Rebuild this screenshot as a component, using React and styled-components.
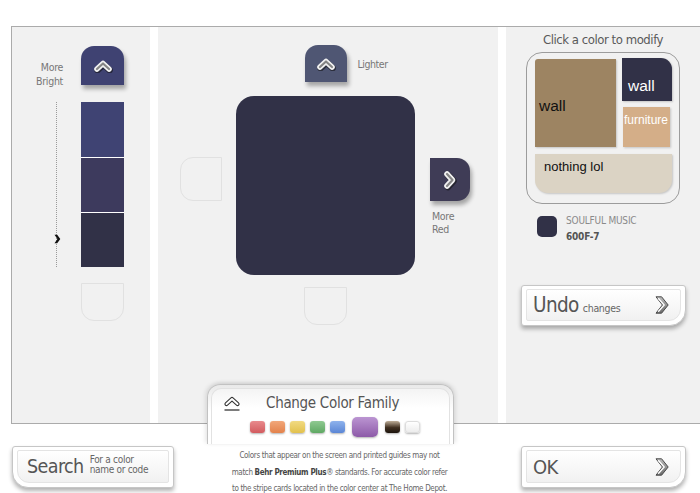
import React from "react";
import styled, { createGlobalStyle } from "styled-components";

const NARROW = `"Liberation Sans Narrow", "Arial Narrow", "DejaVu Sans Condensed", "Roboto Condensed", sans-serif`;
const ARIAL = `"Liberation Sans", Arial, sans-serif`;

const Global = createGlobalStyle`
  html, body { margin: 0; padding: 0; background: #fff; }
  body { font-family: ${NARROW}; width: 700px; height: 493px; overflow: hidden; }
  *, *::before, *::after { box-sizing: border-box; }
`;

const Page = styled.div`
  width: 700px;
  height: 493px;
  overflow: hidden;
`;

const Frame = styled.div`
  margin: 26px 0 0 11px;
  height: 398px;
  border: 1px solid #ababab;
  border-right: none;
  background: #fff;
  display: grid;
  grid-template-columns: 138px 340px 1fr;
  column-gap: 8px;
`;

const Panel = styled.div`
  background: #f1f1f1;
  min-width: 0;
`;

/* ---------- shared bits ---------- */

const NavButton = styled.button`
  border: none;
  padding: 0;
  margin: 0;
  cursor: pointer;
  width: ${(p) => p.$w}px;
  height: ${(p) => p.$h}px;
  background: ${(p) => p.$color};
  border-radius: ${(p) => (p.$dir === "right" ? "0 13px 13px 0" : "13px 13px 0 0")};
  box-shadow: 2px 4px 4px rgba(0, 0, 0, 0.32);
  display: flex;
  align-items: center;
  justify-content: center;
`;

const Ghost = styled.div`
  width: ${(p) => p.$w}px;
  height: ${(p) => p.$h}px;
  border: 1px solid #e1e1e1;
  border-radius: ${(p) => (p.$dir === "left" ? "13px 0 0 13px" : "0 0 13px 13px")};
`;

const SmallLabel = styled.div`
  font-size: 10.5px;
  letter-spacing: -0.3px;
  line-height: 14px;
  color: #777;
  white-space: nowrap;
`;

const UpChevron = () => (
  <svg width="20" height="14" viewBox="0 0 20 14">
    <polyline points="4,10 10,4.5 16,10" fill="none" stroke="#111" strokeOpacity="0.55" strokeWidth="6.5" strokeLinecap="round" strokeLinejoin="round" transform="translate(0.6,1.2)" />
    <polyline points="4,10 10,4.5 16,10" fill="none" stroke="#f2f2f2" strokeWidth="5.6" strokeLinecap="round" strokeLinejoin="round" />
    <polyline points="4,10 10,4.5 16,10" fill="none" stroke="#858585" strokeWidth="2.2" strokeLinecap="round" strokeLinejoin="round" />
  </svg>
);

const RightChevron = () => (
  <svg width="16" height="22" viewBox="0 0 16 22">
    <polyline points="5,5 10.5,11 5,17" fill="none" stroke="#111" strokeOpacity="0.55" strokeWidth="6.5" strokeLinecap="round" strokeLinejoin="round" transform="translate(1,1)" />
    <polyline points="5,5 10.5,11 5,17" fill="none" stroke="#f2f2f2" strokeWidth="5.6" strokeLinecap="round" strokeLinejoin="round" />
    <polyline points="5,5 10.5,11 5,17" fill="none" stroke="#858585" strokeWidth="2.2" strokeLinecap="round" strokeLinejoin="round" />
  </svg>
);

const BevelChevron = () => (
  <svg width="16" height="20" viewBox="0 0 16 20">
    <defs>
      <linearGradient id="bevelChev" x1="0" y1="0" x2="0" y2="1">
        <stop offset="0" stopColor="#bdbdbd" />
        <stop offset="1" stopColor="#6a6a6a" />
      </linearGradient>
    </defs>
    <path d="M2 1.8 H7.6 L14.2 10 L7.6 18.2 H2 L8.4 10 Z" fill="url(#bevelChev)" stroke="#4a4a4a" strokeWidth="1" strokeLinejoin="round" />
    <path d="M4.2 3.2 L10.2 10 L4.2 16.8" fill="none" stroke="#fff" strokeWidth="1.3" />
  </svg>
);

/* ---------- left panel ---------- */

const LeftPanel = styled(Panel)`
  display: grid;
  grid-template-columns: 69px 43px;
  grid-template-rows: 39px 165px 38px;
  row-gap: 17px;
  padding-top: 19px;
  align-content: start;
`;

const BrightLabel = styled(SmallLabel)`
  grid-column: 1;
  grid-row: 1;
  text-align: right;
  padding: 14px 18px 0 0;
`;

const Track = styled.div`
  grid-column: 1;
  grid-row: 2;
  position: relative;
`;

const Dots = styled.div`
  margin-left: 44px;
  width: 0;
  height: 100%;
  border-left: 1px dotted #9a9a9a;
`;

const TrackMarker = styled.svg`
  position: absolute;
  left: 42px;
  top: 132px;
`;

const SwatchStack = styled.div`
  grid-column: 2;
  grid-row: 2;
  display: flex;
  flex-direction: column;
`;

const Swatch = styled.div`
  height: 55px;
  background: ${(p) => p.$color};
  & + & {
    border-top: 1px solid #fff;
  }
`;

/* ---------- center panel ---------- */

const CenterPanel = styled(Panel)`
  display: grid;
  grid-template-columns: 42px 179px 40px;
  grid-template-rows: 37px 179px 38px;
  column-gap: 14px;
  row-gap: 14px;
  padding: 18px 0 0 22px;
  align-content: start;
`;

const TopRow = styled.div`
  grid-column: 2;
  grid-row: 1;
  display: grid;
  grid-template-columns: 1fr 42px 1fr;
  align-items: center;
`;

const LighterLabel = styled(SmallLabel)`
  margin-left: 11px;
  letter-spacing: -0.45px;
`;

const LeftGhost = styled(Ghost)`
  grid-column: 1;
  grid-row: 2;
  margin-top: 61px;
`;

const BigColor = styled.div`
  grid-column: 2;
  grid-row: 2;
  background: #313147;
  border-radius: 18px;
`;

const RightCol = styled.div`
  grid-column: 3;
  grid-row: 2;
  margin: 62px 0 0 1px;
  display: flex;
  flex-direction: column;
`;

const RedLabel = styled(SmallLabel)`
  margin: 9px 0 0 2px;
  line-height: 12.5px;
`;

const BottomGhost = styled(Ghost)`
  grid-column: 2;
  grid-row: 3;
  justify-self: center;
  margin-top: -2px;
`;

/* ---------- right panel ---------- */

const RightPanel = styled(Panel)`
  display: flex;
  flex-direction: column;
  align-items: center;
  padding-top: 6px;
`;

const Title = styled.div`
  font-size: 13px;
  letter-spacing: -0.45px;
  line-height: 14px;
  color: #5a5a5a;
  white-space: nowrap;
`;

const RoomBox = styled.div`
  margin-top: 5px;
  width: 154px;
  height: 152px;
  border: 1px solid #9c9c9c;
  border-radius: 16px;
  padding: 5px 8px 8px 8px;
  display: grid;
  grid-template-columns: 81px 50px;
  grid-template-rows: 43px 40px 40px;
  column-gap: 6px;
  row-gap: 6px;
`;

const Tile = styled.div`
  font-family: ${ARIAL};
  background: ${(p) => p.$color};
  color: ${(p) => p.$text};
  box-shadow: 1px 1px 2px rgba(0, 0, 0, 0.18);
  white-space: nowrap;
  overflow: hidden;
`;

const BigWall = styled(Tile)`
  grid-column: 1;
  grid-row: 1 / span 2;
  margin-top: 1px;
  border-radius: 3px 0 0 0;
  display: flex;
  align-items: center;
  padding: 5px 0 0 4px;
  font-size: 15.5px;
`;

const DarkWall = styled(Tile)`
  grid-column: 2;
  grid-row: 1;
  border-radius: 0 11px 0 0;
  font-size: 15.5px;
  padding: 19px 0 0 6px;
  line-height: 18px;
`;

const Furniture = styled(Tile)`
  grid-column: 2;
  grid-row: 2;
  margin: 0 2px 0 1px;
  font-size: 12px;
  padding: 6px 0 0 1px;
`;

const Nothing = styled(Tile)`
  grid-column: 1 / span 2;
  grid-row: 3;
  margin-top: 1px;
  border-radius: 0 0 13px 13px;
  font-size: 13px;
  padding: 5px 0 0 9px;
`;

const InfoRow = styled.div`
  align-self: flex-start;
  margin: 11px 0 0 31px;
  display: flex;
  align-items: flex-start;
`;

const InfoChip = styled.div`
  width: 20px;
  height: 21px;
  border-radius: 5px;
  background: #313147;
  margin-top: 1px;
`;

const InfoText = styled.div`
  margin-left: 9px;
  font-size: 10px;
  letter-spacing: -0.2px;
  line-height: 16px;
  margin-top: -2px;
`;

const InfoName = styled.div`
  color: #8a8a8a;
`;

const InfoCode = styled.div`
  color: #555;
  font-weight: bold;
`;

/* ---------- bevel buttons ---------- */

const Bevel = styled.div`
  height: 42px;
  background: #fff;
  border: 1px solid #c6c6c6;
  border-radius: ${(p) => (p.$round === "left" ? "3px 3px 3px 16px" : "3px 3px 16px 3px")};
  box-shadow: 0 3px 4px rgba(0, 0, 0, 0.3);
  padding: 3px 4px 4px;
`;

const BevelInner = styled.div`
  height: 100%;
  border: 1px solid #e4e4e4;
  border-radius: ${(p) => (p.$round === "left" ? "2px 2px 2px 12px" : "2px 2px 12px 2px")};
  background: linear-gradient(#ffffff, #f1f1f1);
  display: flex;
  align-items: center;
  padding: 0 10px 0 ${(p) => p.$pad}px;
`;

const BigWord = styled.span`
  font-size: ${(p) => p.$size || 20}px;
  letter-spacing: -0.6px;
  line-height: 1;
  color: #555;
  white-space: nowrap;
`;

const Sub = styled.span`
  font-size: 10.5px;
  letter-spacing: -0.3px;
  color: #666;
  margin-left: 4px;
  white-space: nowrap;
`;

const LabelGroup = styled.div`
  display: flex;
  align-items: baseline;
`;

const SubStack = styled.div`
  margin-left: 6px;
  font-size: 10px;
  letter-spacing: -0.3px;
  line-height: 10px;
  color: #666;
  margin-top: -3px;
  white-space: nowrap;
`;

const ChevronSlot = styled.div`
  margin-left: auto;
  display: flex;
`;

const UndoButton = styled(Bevel)`
  align-self: flex-start;
  margin: 40px 0 0 15px;
  width: 165px;
  height: 41px;
`;

/* ---------- bottom ---------- */

const BottomBar = styled.div`
  display: flex;
  align-items: flex-start;
  padding-left: 12px;
`;

const SearchButton = styled(Bevel)`
  margin-top: 22px;
  width: 162px;
`;

const OkButton = styled(Bevel)`
  margin: 22px 0 0 67px;
  width: 165px;
`;

const FamilyCol = styled.div`
  position: relative;
  z-index: 2;
  width: 247px;
  margin: -40px 0 0 33px;
`;

const Tab = styled.div`
  height: 60px;
  border: 1px solid #c2c2c2;
  border-bottom: none;
  border-radius: 13px 13px 0 0;
  background: linear-gradient(#e9e9e9, #ffffff 45%);
  padding: 3px 3px 0;
  box-shadow: -2px -1px 4px rgba(0, 0, 0, 0.09), 2px -1px 4px rgba(0, 0, 0, 0.09);
`;

const TabInner = styled.div`
  height: 100%;
  border: 1px solid #e2e2e2;
  border-bottom: none;
  border-radius: 10px 10px 0 0;
  background: linear-gradient(#f4f4f4, #ffffff 35%);
  display: flex;
  flex-direction: column;
`;

const TabHeader = styled.div`
  height: 28px;
  display: flex;
  align-items: center;
  padding-left: 11px;
`;

const TabTitle = styled.div`
  margin-left: 25px;
  font-size: 15px;
  letter-spacing: -0.3px;
  color: #555;
  white-space: nowrap;
`;

const Chips = styled.div`
  display: flex;
  align-items: center;
  justify-content: center;
  gap: 5px;
  padding-left: 9px;
  height: 20px;
`;

const Chip = styled.div`
  width: ${(p) => (p.$big ? 26 : 15)}px;
  height: ${(p) => (p.$big ? 20 : 12)}px;
  margin: 0 ${(p) => (p.$big ? 2 : 0)}px;
  border-radius: ${(p) => (p.$big ? 5 : 3)}px;
  background: ${(p) => p.$bg};
  border: ${(p) => (p.$light ? "1px solid #dcdcdc" : "none")};
  box-shadow: 0 1px 2px rgba(0, 0, 0, 0.3);
`;

const Disclaimer = styled.div`
  margin-top: 4px;
  padding-left: 18px;
  text-align: center;
  font-size: 8px;
  letter-spacing: -0.35px;
  line-height: 16.5px;
  color: #666;
  white-space: nowrap;
  b {
    color: #444;
  }
`;

const chips = [
  { bg: "linear-gradient(#e88a8c, #d25b5f)" },
  { bg: "linear-gradient(#f1a77a, #e3824c)" },
  { bg: "linear-gradient(#f1da82, #e2c14d)" },
  { bg: "linear-gradient(#8fc991, #5fa863)" },
  { bg: "linear-gradient(#8eb2ec, #5b86d5)" },
  { bg: "linear-gradient(#bb95d2, #8d5aa8)", big: true },
  { bg: "linear-gradient(#bfae98, #3f2f20 55%, #1c140d)" },
  { bg: "linear-gradient(#ffffff, #ececec)", light: true },
];

export default function App() {
  return (
    <Page>
      <Global />
      <Frame>
        <LeftPanel>
          <BrightLabel>
            More
            <br />
            Bright
          </BrightLabel>
          <NavButton $w={43} $h={39} $color="#3f4272" $dir="up" style={{ gridColumn: 2, gridRow: 1 }}>
            <UpChevron />
          </NavButton>
          <Track>
            <Dots />
            <TrackMarker width="7" height="10" viewBox="0 0 7 10">
              <polygon points="0.5,0.8 3.2,0.8 6.3,5 3.2,9.2 0.5,9.2 3.4,5" fill="#111" />
            </TrackMarker>
          </Track>
          <SwatchStack>
            <Swatch $color="#3f4373" />
            <Swatch $color="#3d3a5d" />
            <Swatch $color="#313147" />
          </SwatchStack>
          <Ghost $w={43} $h={38} $dir="down" style={{ gridColumn: 2, gridRow: 3, marginTop: -1 }} />
        </LeftPanel>

        <CenterPanel>
          <TopRow>
            <span />
            <NavButton $w={42} $h={37} $color="#4f5673" $dir="up">
              <UpChevron />
            </NavButton>
            <LighterLabel>Lighter</LighterLabel>
          </TopRow>
          <LeftGhost $w={42} $h={44} $dir="left" />
          <BigColor />
          <RightCol>
            <NavButton $w={40} $h={43} $color="#3f3c56" $dir="right">
              <RightChevron />
            </NavButton>
            <RedLabel>
              More
              <br />
              Red
            </RedLabel>
          </RightCol>
          <BottomGhost $w={43} $h={38} $dir="down" />
        </CenterPanel>

        <RightPanel>
          <Title>Click a color to modify</Title>
          <RoomBox>
            <BigWall $color="#9d8462" $text="#111">wall</BigWall>
            <DarkWall $color="#313147" $text="#fff">wall</DarkWall>
            <Furniture $color="#d4ae88" $text="#fff">furniture</Furniture>
            <Nothing $color="#dbd3c4" $text="#111">nothing lol</Nothing>
          </RoomBox>
          <InfoRow>
            <InfoChip />
            <InfoText>
              <InfoName>SOULFUL MUSIC</InfoName>
              <InfoCode>600F-7</InfoCode>
            </InfoText>
          </InfoRow>
          <UndoButton $round="right">
            <BevelInner $round="right" $pad={6}>
              <LabelGroup>
                <BigWord $size={20.5}>Undo</BigWord>
                <Sub>changes</Sub>
              </LabelGroup>
              <ChevronSlot>
                <BevelChevron />
              </ChevronSlot>
            </BevelInner>
          </UndoButton>
        </RightPanel>
      </Frame>

      <BottomBar>
        <SearchButton $round="left">
          <BevelInner $round="left" $pad={9}>
            <BigWord $size={19.5}>Search</BigWord>
            <SubStack>
              For a color
              <br />
              name or code
            </SubStack>
          </BevelInner>
        </SearchButton>

        <FamilyCol>
          <Tab>
            <TabInner>
              <TabHeader>
                <svg width="18" height="18" viewBox="0 0 18 18">
                  <polyline points="3.5,10 9,5 14.5,10" fill="none" stroke="#333" strokeWidth="4.2" strokeLinecap="round" strokeLinejoin="round" />
                  <polyline points="3.5,10 9,5 14.5,10" fill="none" stroke="#fff" strokeWidth="2" strokeLinecap="round" strokeLinejoin="round" />
                  <line x1="1.5" y1="16" x2="16.5" y2="16" stroke="#444" strokeWidth="1.4" />
                </svg>
                <TabTitle>Change Color Family</TabTitle>
              </TabHeader>
              <Chips>
                {chips.map((c, i) => (
                  <Chip key={i} $bg={c.bg} $big={c.big} $light={c.light} />
                ))}
              </Chips>
            </TabInner>
          </Tab>
          <Disclaimer>
            Colors that appear on the screen and printed guides may not
            <br />
            match <b>Behr Premium Plus</b>® standards. For accurate color refer
            <br />
            to the stripe cards located in the color center at The Home Depot.
          </Disclaimer>
        </FamilyCol>

        <OkButton $round="right">
          <BevelInner $round="right" $pad={6}>
            <BigWord $size={20}>OK</BigWord>
            <ChevronSlot>
              <BevelChevron />
            </ChevronSlot>
          </BevelInner>
        </OkButton>
      </BottomBar>
    </Page>
  );
}
